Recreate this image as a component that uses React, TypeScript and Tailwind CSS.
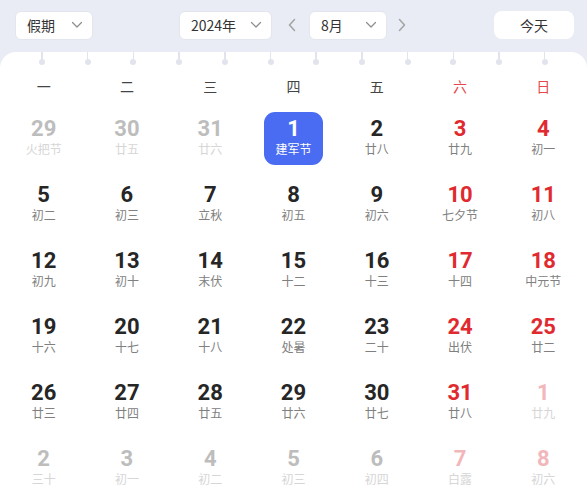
import React from "react";

type Cell = { d: number; l: string; kind: "prev" | "cur" | "next"; red?: boolean; sel?: boolean };

const rows: [number, string][][] = [
  [[29, "火把节"], [30, "廿五"], [31, "廿六"], [1, "建军节"], [2, "廿八"], [3, "廿九"], [4, "初一"]],
  [[5, "初二"], [6, "初三"], [7, "立秋"], [8, "初五"], [9, "初六"], [10, "七夕节"], [11, "初八"]],
  [[12, "初九"], [13, "初十"], [14, "末伏"], [15, "十二"], [16, "十三"], [17, "十四"], [18, "中元节"]],
  [[19, "十六"], [20, "十七"], [21, "十八"], [22, "处暑"], [23, "二十"], [24, "出伏"], [25, "廿二"]],
  [[26, "廿三"], [27, "廿四"], [28, "廿五"], [29, "廿六"], [30, "廿七"], [31, "廿八"], [1, "廿九"]],
  [[2, "三十"], [3, "初一"], [4, "初二"], [5, "初三"], [6, "初四"], [7, "白露"], [8, "初六"]],
];

const cells: Cell[][] = rows.map((r, ri) =>
  r.map(([d, l], ci) => {
    let kind: Cell["kind"] = "cur";
    if (ri === 0 && ci < 3) kind = "prev";
    if (ri === 4 && ci === 6) kind = "next";
    if (ri === 5) kind = "next";
    return { d, l, kind, red: ci >= 5, sel: ri === 0 && ci === 3 };
  })
);

const Chevron = () => (
  <svg width="12" height="8" viewBox="0 0 12 8" fill="none">
    <path d="M1.5 1.5 L6 6 L10.5 1.5" stroke="#8c8c8c" strokeWidth="1.2" strokeLinecap="round" strokeLinejoin="round" />
  </svg>
);

const Arrow = ({ dir }: { dir: "l" | "r" }) => (
  <svg width="10" height="16" viewBox="0 0 10 16" fill="none">
    <path
      d={dir === "l" ? "M7.5 2.5 L2.5 8 L7.5 13.5" : "M2.5 2.5 L7.5 8 L2.5 13.5"}
      stroke="#a3a3a3"
      strokeWidth="1.5"
      strokeLinecap="round"
      strokeLinejoin="round"
    />
  </svg>
);

const cjk = { fontFamily: '"Noto Sans CJK SC", "Noto Sans", sans-serif' };
const num = { fontFamily: 'Roboto, "Noto Sans", sans-serif' };

function DayCell({ c }: { c: Cell }) {
  let numColor = "text-[#262626]";
  let lunarColor = "text-[#808080]";
  if (c.kind !== "cur") {
    numColor = c.red ? "text-[#f2b7ba]" : "text-[#bdbdbd]";
    lunarColor = "text-[#d6d6d6]";
  } else if (c.red) {
    numColor = "text-[#e02a30]";
  }
  if (c.sel) {
    return (
      <div className="flex h-[66px] items-center justify-center">
        <div className="flex h-[53px] w-[59px] flex-col items-center justify-center rounded-[11px] bg-[#4a6cf2]">
          <div className="text-[22px] font-bold leading-[22px] text-white" style={num}>
            {c.d}
          </div>
          <div className="text-[12px] leading-[18px] text-white" style={cjk}>
            {c.l}
          </div>
        </div>
      </div>
    );
  }
  return (
    <div className="flex h-[66px] flex-col items-center justify-center">
      <div className={`text-[22px] font-bold leading-[22px] ${numColor}`} style={num}>
        {c.d}
      </div>
      <div className={`text-[12px] leading-[18px] ${lunarColor}`} style={cjk}>
        {c.l}
      </div>
    </div>
  );
}

export default function App() {
  const weekdays = ["一", "二", "三", "四", "五", "六", "日"];
  return (
    <div className="h-[499px] w-[587px] overflow-hidden bg-[#e9ecf4]" style={cjk}>
      <div className="flex h-[52px] items-center px-[15px] pb-[2px]">
        <div className="flex h-[29px] w-[78px] items-center justify-between rounded-[6px] border border-[#e3e6ee] bg-white pl-[11px] pr-[9px] text-[14px] text-[#333]">
          <span>假期</span>
          <Chevron />
        </div>
        <div className="ml-[86px] flex h-[29px] w-[93px] items-center justify-between rounded-[6px] border border-[#e3e6ee] bg-white pl-[11px] pr-[9px] text-[14px] text-[#333]">
          <span>2024年</span>
          <Chevron />
        </div>
        <div className="ml-[15px] mr-[12px] flex items-center">
          <Arrow dir="l" />
        </div>
        <div className="flex h-[29px] w-[78px] items-center justify-between rounded-[6px] border border-[#e3e6ee] bg-white pl-[11px] pr-[9px] text-[14px] text-[#333]">
          <span>8月</span>
          <Chevron />
        </div>
        <div className="ml-[10px] flex items-center">
          <Arrow dir="r" />
        </div>
        <div className="ml-auto mr-[-2px] flex h-[28px] w-[80px] items-center justify-center rounded-[8px] bg-white text-[14px] text-[#333]">
          今天
        </div>
      </div>
      <div className="relative rounded-t-[16px] bg-white px-[2px]">
        <div className="pointer-events-none absolute left-0 top-0 h-[14px] w-full">
          {Array.from({ length: 12 }).map((_, i) => (
            <div key={i} className="absolute top-0 flex flex-col items-center" style={{ left: 42 + i * 45.7 - 3 }}>
              <div className="h-[7px] w-[1.5px] bg-[#e1e4ec]" />
              <div className="h-[6px] w-[6px] rounded-full bg-[#e1e4ec]" />
            </div>
          ))}
        </div>
        <div className="grid h-[53px] grid-cols-7 pt-[25px]">
          {weekdays.map((w, i) => (
            <div key={w} className={`text-center text-[14px] leading-[18px] ${i >= 5 ? "text-[#e5484d]" : "text-[#444]"}`}>
              {w}
            </div>
          ))}
        </div>
        {cells.map((r, ri) => (
          <div key={ri} className="grid grid-cols-7">
            {r.map((c, ci) => (
              <DayCell key={ci} c={c} />
            ))}
          </div>
        ))}
      </div>
    </div>
  );
}
